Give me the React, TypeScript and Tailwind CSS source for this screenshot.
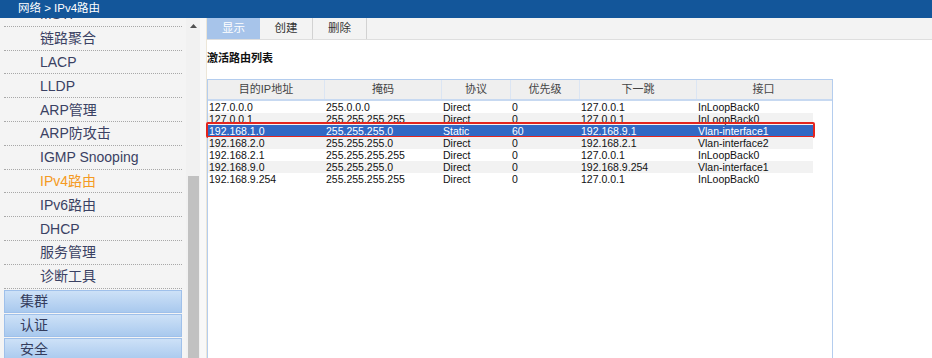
import React from "react";

const menuItems = [
  "MSTP",
  "链路聚合",
  "LACP",
  "LLDP",
  "ARP管理",
  "ARP防攻击",
  "IGMP Snooping",
  "IPv4路由",
  "IPv6路由",
  "DHCP",
  "服务管理",
  "诊断工具",
];

const groups = ["集群", "认证", "安全"];

const columns = [
  { title: "目的IP地址", w: "w-[117px]" },
  { title: "掩码", w: "w-[117px]" },
  { title: "协议", w: "w-[69px]" },
  { title: "优先级", w: "w-[69px]" },
  { title: "下一跳", w: "w-[117px]" },
  { title: "接口", w: "w-[133px]" },
];

const routes = [
  ["127.0.0.0", "255.0.0.0", "Direct", "0", "127.0.0.1", "InLoopBack0"],
  ["127.0.0.1", "255.255.255.255", "Direct", "0", "127.0.0.1", "InLoopBack0"],
  ["192.168.1.0", "255.255.255.0", "Static", "60", "192.168.9.1", "Vlan-interface1"],
  ["192.168.2.0", "255.255.255.0", "Direct", "0", "192.168.2.1", "Vlan-interface2"],
  ["192.168.2.1", "255.255.255.255", "Direct", "0", "127.0.0.1", "InLoopBack0"],
  ["192.168.9.0", "255.255.255.0", "Direct", "0", "192.168.9.254", "Vlan-interface1"],
  ["192.168.9.254", "255.255.255.255", "Direct", "0", "127.0.0.1", "InLoopBack0"],
];

const Sidebar: React.FC = () => {
  return (
    <aside className="w-[186px] shrink-0 h-full bg-[#f4f4f4] overflow-hidden">
      <div className="mt-[-15px]">
        {menuItems.map((item) => (
          <div
            key={item}
            className="mx-[4px] h-[23.8px] border-b border-dotted border-[#a8a8a8] flex items-center pl-[36px] text-[14px] leading-none"
          >
            <span className={item === "IPv4路由" ? "text-[#f59a23]" : "text-[#3a4163]"}>{item}</span>
          </div>
        ))}
        <div className="mt-[1px] flex flex-col gap-[1px]">
          {groups.map((g) => (
            <div
              key={g}
              className="mx-[4px] h-[23px] border border-[#9fc0ea] bg-gradient-to-b from-[#cde1f7] to-[#a9c9ee] flex items-center pl-[15px] text-[14px] text-[#343c5c]"
            >
              {g}
            </div>
          ))}
        </div>
      </div>
    </aside>
  );
};

const Scrollbar: React.FC = () => (
  <div className="w-[14px] shrink-0 h-full bg-[#f1f1f1] flex flex-col items-center">
    <div className="h-[12px] mt-[2px] flex items-center justify-center">
      <svg width="7" height="4" viewBox="0 0 7 4">
        <path d="M0 4 L3.5 0 L7 4 Z" fill="#505050" />
      </svg>
    </div>
    <div className="h-[144px]" />
    <div className="w-[11px] flex-1 bg-[#c1c1c1]" />
  </div>
);

const App: React.FC = () => {
  return (
    <div className="w-[932px] h-[358px] overflow-hidden bg-white font-['Liberation_Sans','Noto_Sans_CJK_SC',sans-serif] flex flex-col">
      <header className="relative z-10 h-[18px] shrink-0 bg-[#13569a] flex items-center pl-[18px] text-[11.5px] text-white">
        网络 &gt; IPv4路由
      </header>
      <div className="flex flex-1 min-h-0">
        <Sidebar />
        <Scrollbar />
        <div className="w-[7px] shrink-0 bg-[#f8f8f8] border-r border-[#ece6d8]" />
        <main className="flex-1 flex flex-col min-w-0">
          <div className="h-[22px] bg-[#f3f3f3] border-b border-[#dedede] flex text-[11.5px]">
            <div className="w-[53px] bg-[#a7c4ea] text-white flex items-center justify-center">显示</div>
            <div className="w-[53px] border-r border-[#d2d2d2] text-[#333] flex items-center justify-center">创建</div>
            <div className="w-[54px] border-r border-[#d2d2d2] text-[#333] flex items-center justify-center">删除</div>
          </div>
          <div className="h-[39px] flex items-center pb-[3px] text-[11px] font-bold text-[#111]">激活路由列表</div>
          <div className="w-[626px] flex-1 border-x border-t border-[#b4cdee] flex flex-col">
            <div className="h-[21px] bg-[#efefef] border-b-2 border-[#c7d9f1] flex text-[11px] text-[#444]">
              {columns.map((c, i) => (
                <div
                  key={c.title}
                  className={`${c.w} shrink-0 flex items-center justify-center ${i < columns.length - 1 ? "border-r border-[#dbe5f3]" : ""}`}
                >
                  {c.title}
                </div>
              ))}
            </div>
            <div className="w-[605px] flex flex-col text-[10.5px] text-[#111]">
              {routes.map((r, idx) => {
                const selected = idx === 2;
                const bg = selected ? "bg-[#3168c4] text-white" : idx % 2 === 1 ? "bg-[#f2f2f2]" : "bg-white";
                return (
                  <div key={r[0]} className={`relative h-[12px] flex items-center leading-none ${bg}`}>
                    {r.map((cell, ci) => (
                      <div key={ci} className={`${columns[ci].w} shrink-0 pl-[1px] whitespace-nowrap`}>
                        {cell}
                      </div>
                    ))}
                    {selected && (
                      <div className="absolute left-[-2px] right-[-2px] top-[-3px] bottom-[-1px] border-2 border-[#e4251e] rounded-[2px]" />
                    )}
                  </div>
                );
              })}
            </div>
          </div>
        </main>
      </div>
    </div>
  );
};

export default App;
